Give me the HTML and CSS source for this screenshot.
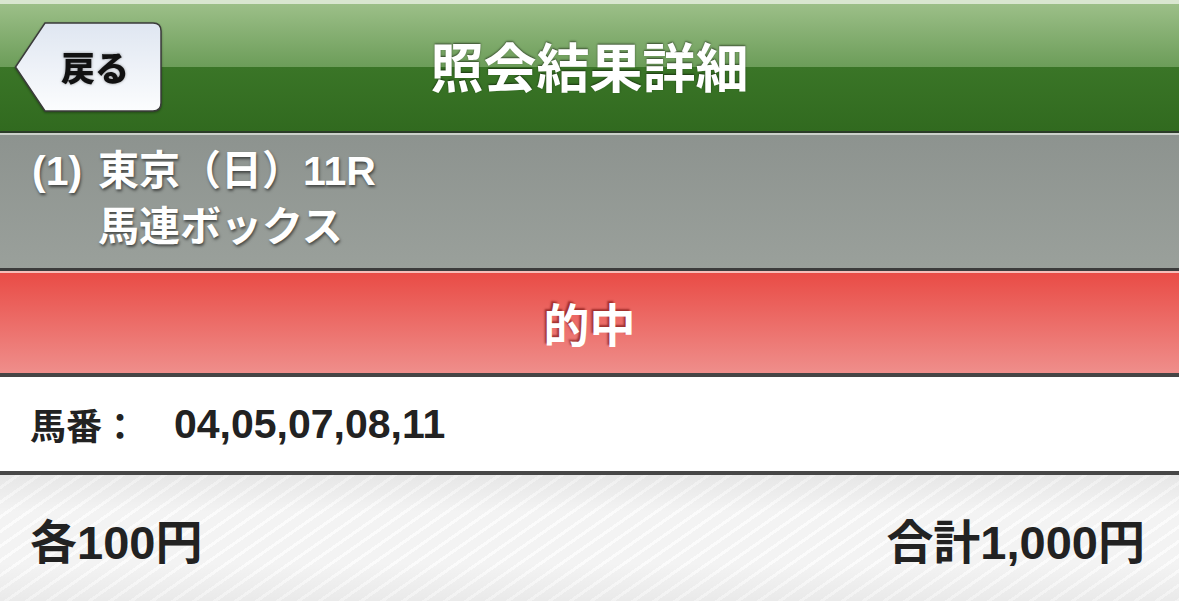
FILE: index.html
```html
<!DOCTYPE html>
<html lang="ja">
<head>
<meta charset="utf-8">
<title>照会結果詳細</title>
<link rel="stylesheet" href="styles.css">
</head>
<body>
<div class="page">
  <header class="header">
    <a class="back" href="#">
      <svg class="back-shape" viewBox="0 0 148 90" preserveAspectRatio="none" aria-hidden="true">
        <defs>
          <linearGradient id="bg" x1="0" y1="0" x2="0" y2="1">
            <stop offset="0" stop-color="#dfe6f1"/>
            <stop offset="1" stop-color="#fcfdfe"/>
          </linearGradient>
        </defs>
        <path d="M31 1 H139 Q147 1 147 9 V81 Q147 89 139 89 H31 L1.5 45 Z" fill="url(#bg)" stroke="#3b3b3b" stroke-width="1.5"/>
      </svg>
      <span class="back-label">戻る</span>
    </a>
    <h1 class="title">照会結果詳細</h1>
    <div class="spacer"></div>
  </header>
  <div class="hl"></div>
  <section class="race">
    <span class="race-no">(1)</span>
    <div class="race-lines">
      <div>東京（日）11R</div>
      <div>馬連ボックス</div>
    </div>
  </section>
  <section class="result">的中</section>
  <section class="horses">
    <span class="label">馬番：</span><span class="nums">04,05,07,08,11</span>
  </section>
  <section class="amounts">
    <span>各100円</span>
    <span>合計1,000円</span>
  </section>
</div>
</body>
</html>
```
FILE: styles.css
```css
html, body {
  margin: 0;
  padding: 0;
  background: #444;
}
.page {
  width: 1179px;
  height: 608px;
  overflow: hidden;
  background: #fff;
  font-family: "Liberation Sans", "Noto Sans CJK JP", sans-serif;
  font-weight: bold;
}
.header {
  box-sizing: border-box;
  height: 133px;
  border-top: 4px solid #d9e6d0;
  border-bottom: 2px solid #2c3b29;
  background: linear-gradient(#9cbf88 0%, #6c9d59 49.5%, #3a7527 50%, #316a1f 100%);
  display: grid;
  grid-template-columns: 1fr auto 1fr;
  align-items: center;
}
.back {
  position: relative;
  justify-self: start;
  margin-left: 14px;
  margin-bottom: 1px;
  width: 148px;
  height: 90px;
  display: flex;
  align-items: center;
  padding-left: 47px;
  box-sizing: border-box;
  text-decoration: none;
  filter: drop-shadow(0 1px 1px rgba(0,0,0,0.35));
}
.back-shape {
  position: absolute;
  left: 0;
  top: 0;
  width: 148px;
  height: 90px;
}
.back-label {
  position: relative;
  font-family: "Noto Sans CJK JP", sans-serif;
  font-size: 34px;
  line-height: 1;
  font-weight: 900;
  color: #111;
  text-shadow: 0 0 3px rgba(0,0,0,0.4);
}
.title {
  margin: 0 0 4px;
  font-family: "Noto Sans CJK JP", sans-serif;
  font-size: 53px;
  line-height: 1;
  font-weight: bold;
  color: #fff;
  text-shadow: 0 -1px 2px rgba(0,0,0,0.55);
}
.hl {
  height: 2px;
  background: #cbd0ca;
}
.race {
  box-sizing: border-box;
  height: 136px;
  border-bottom: 3px solid #3c3c3c;
  background: linear-gradient(#8d938f, #9aa09b);
  display: flex;
  padding: 8px 0 0 32px;
  color: #fff;
  font-size: 41px;
  line-height: 56px;
  text-shadow: 1px 2px 3px rgba(0,0,0,0.55);
}
.race-no {
  width: 66px;
}
.result {
  box-sizing: border-box;
  height: 106px;
  border-top: 2px solid #f6bdb8;
  border-bottom: 4px solid #454545;
  background: linear-gradient(#e94c46, #ef8e8b);
  display: flex;
  align-items: center;
  justify-content: center;
  padding-bottom: 2px;
  color: #fff;
  font-family: "Noto Sans CJK JP", sans-serif;
  font-size: 46px;
  text-shadow: -2px -2px 2px rgba(110,10,10,0.6);
}
.horses {
  box-sizing: border-box;
  height: 98px;
  border-bottom: 4px solid #474747;
  display: flex;
  align-items: center;
  padding-left: 30px;
  color: #222;
}
.label {
  font-size: 36px;
}
.nums {
  font-size: 41px;
  margin-left: 36px;
}
.amounts {
  box-sizing: border-box;
  height: 126px;
  display: flex;
  align-items: center;
  justify-content: space-between;
  padding: 0 34px 0 30px;
  color: #222;
  font-size: 47px;
  background:
    linear-gradient(rgba(0,0,0,0.05), rgba(0,0,0,0) 30%, rgba(0,0,0,0) 70%, rgba(0,0,0,0.04)),
    repeating-linear-gradient(145deg, #f3f3f3 0 9px, #fbfbfb 9px 12px);
}
```
